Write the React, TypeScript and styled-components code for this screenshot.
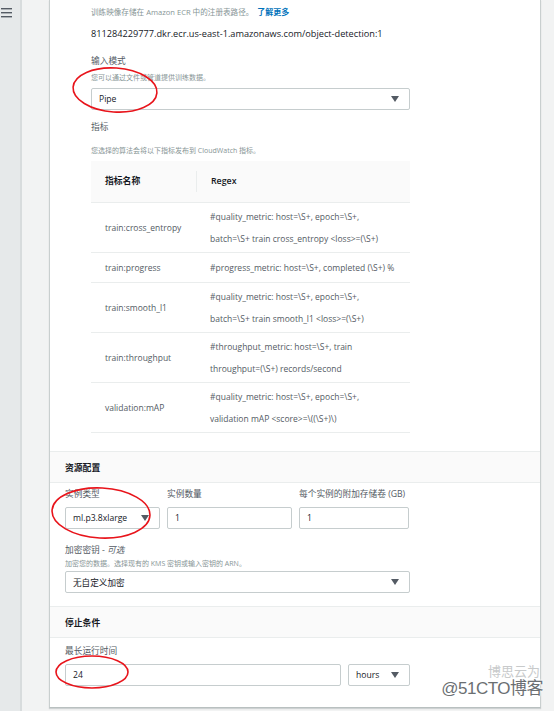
import React from "react";
import styled, { createGlobalStyle } from "styled-components";

const Global = createGlobalStyle`
  html, body { margin: 0; padding: 0; }
  body {
    font-family: "Open Sans", "Noto Sans CJK SC", sans-serif;
    color: #16191f;
    background: #f2f3f3;
  }
`;

const Page = styled.div`
  position: relative;
  display: flex;
  width: 554px;
  height: 711px;
  overflow: hidden;
`;

const Sidebar = styled.div`
  width: 22px;
  flex: none;
  background: #e6e9ea;
  border-right: 2px solid #d8dcdd;
  padding-top: 7px;
  box-sizing: border-box;
`;

const Main = styled.div`
  flex: 1;
  background: #f2f3f3;
  padding: 0 13px 4px 27px;
  display: flex;
  align-items: flex-start;
`;

const Panel = styled.div`
  flex: 1;
  background: #fff;
  border-left: 1px solid #c9cfcf;
  border-right: 1px solid #c9cfcf;
  border-bottom: 1px solid #b9c0c0;
  box-shadow: 0 1px 1px rgba(0, 28, 36, 0.15);
  padding-bottom: 21px;
`;

const TopBlock = styled.div`
  display: flex;
  flex-direction: column;
  padding: 5px 130px 0 41px;
`;

const Hint = styled.div<{ $mt?: number; $size?: number }>`
  font-size: ${(p) => p.$size ?? 7}px;
  line-height: 13px;
  color: #879596;
  margin-top: ${(p) => p.$mt ?? 0}px;
  white-space: nowrap;
`;

const Link = styled.a`
  color: #0073bb;
  font-size: 8px;
  font-weight: 700;
  text-decoration: none;
  margin-left: 4px;
`;

const Value = styled.div<{ $mt?: number }>`
  font-size: 9.2px;
  line-height: 14px;
  color: #16191f;
  margin-top: ${(p) => p.$mt ?? 0}px;
`;

const Label = styled.div<{ $mt?: number }>`
  font-size: 8.7px;
  line-height: 13px;
  color: #545b64;
  margin-top: ${(p) => p.$mt ?? 0}px;
  white-space: nowrap;
`;

const Optional = styled.i`
  font-style: italic;
`;

const Box = styled.div<{ $mt?: number; $w?: string }>`
  box-sizing: border-box;
  height: 22px;
  border: 1px solid #c6cdce;
  border-radius: 2px;
  background: #fff;
  display: flex;
  align-items: center;
  justify-content: space-between;
  padding: 0 10px 0 7px;
  font-size: 8.6px;
  color: #16191f;
  margin-top: ${(p) => p.$mt ?? 0}px;
  width: ${(p) => p.$w ?? "100%"};
  flex: none;
`;

const Arrow = styled.span`
  width: 0;
  height: 0;
  border-left: 4.5px solid transparent;
  border-right: 4.5px solid transparent;
  border-top: 6px solid #545b64;
`;

const Table = styled.div`
  margin-top: 4px;
  display: flex;
  flex-direction: column;
`;

const HeadRow = styled.div`
  display: grid;
  grid-template-columns: 105px 1fr;
  height: 41px;
  background: #fafafa;
  align-items: center;
  font-size: 8.8px;
  font-weight: 600;
  color: #16191f;
`;

const HeadCell = styled.div<{ $divider?: boolean }>`
  padding-left: 14px;
  line-height: 21px;
  border-left: ${(p) => (p.$divider ? "1px solid #eaeded" : "none")};
`;

const Row = styled.div`
  display: grid;
  grid-template-columns: 105px 1fr;
  border-top: 1px solid #eaeded;
  align-items: center;
  font-size: 8.5px;
  color: #545b64;
  padding: 2.5px 0;
  min-height: 24px;
`;

const Cell = styled.div`
  padding-left: 14px;
  line-height: 22px;
  white-space: nowrap;
`;

const TableEnd = styled.div`
  border-top: 1px solid #eaeded;
`;

const SectionHead = styled.div<{ $mt?: number }>`
  margin-top: ${(p) => p.$mt ?? 0}px;
  height: 30px;
  box-sizing: content-box;
  background: #fafafa;
  border-top: 1px solid #eaeded;
  border-bottom: 1px solid #eaeded;
  display: flex;
  align-items: center;
  padding-left: 15px;
  font-size: 8.8px;
  font-weight: 700;
  color: #16191f;
`;

const SectionBody = styled.div<{ $pt?: number }>`
  padding: ${(p) => p.$pt ?? 6}px 130px 0 15px;
  display: flex;
  flex-direction: column;
`;

const FieldRow = styled.div`
  display: grid;
  grid-template-columns: 95px 125px 110px;
  column-gap: 7px;
`;

const Field = styled.div`
  display: flex;
  flex-direction: column;
  gap: 6px;
`;

const InlineRow = styled.div<{ $mt?: number }>`
  display: flex;
  gap: 7px;
  margin-top: ${(p) => p.$mt ?? 0}px;
`;

const Overlay = styled.svg`
  position: absolute;
  left: 0;
  top: 0;
  pointer-events: none;
`;

const Watermark = styled.div`
  position: absolute;
  right: 11px;
  bottom: 13px;
  font-family: "Liberation Sans", "Noto Sans CJK SC", sans-serif;
  font-size: 17px;
  line-height: 18px;
  color: #6b6f72;
  text-shadow: 0 0 2px #fff, 0 0 2px #fff, 0 0 3px #fff;
  letter-spacing: -0.5px;
`;

const WatermarkSmall = styled.div`
  position: absolute;
  right: 14px;
  bottom: 33px;
  font-family: "Noto Sans CJK SC", sans-serif;
  font-size: 13px;
  line-height: 14px;
  color: #c8cacb;
  text-shadow: 0 0 2px #fff;
`;

const Hamburger = () => (
  <svg width="14" height="12" viewBox="0 0 14 12" style={{ display: "block" }}>
    <rect x="1" y="1" width="11" height="1.4" fill="#545b64" />
    <rect x="1" y="5" width="11" height="1.4" fill="#545b64" />
    <rect x="1" y="9" width="11" height="1.4" fill="#545b64" />
  </svg>
);

const metrics: { name: string; regex: string[] }[] = [
  {
    name: "train:cross_entropy",
    regex: [
      "#quality_metric: host=\\S+, epoch=\\S+,",
      "batch=\\S+ train cross_entropy <loss>=(\\S+)",
    ],
  },
  { name: "train:progress", regex: ["#progress_metric: host=\\S+, completed (\\S+) %"] },
  {
    name: "train:smooth_l1",
    regex: [
      "#quality_metric: host=\\S+, epoch=\\S+,",
      "batch=\\S+ train smooth_l1 <loss>=(\\S+)",
    ],
  },
  {
    name: "train:throughput",
    regex: ["#throughput_metric: host=\\S+, train", "throughput=(\\S+) records/second"],
  },
  {
    name: "validation:mAP",
    regex: [
      "#quality_metric: host=\\S+, epoch=\\S+,",
      "validation mAP <score>=\\((\\S+)\\)",
    ],
  },
];

export default function App() {
  return (
    <>
      <Global />
      <Page>
        <Sidebar>
          <Hamburger />
        </Sidebar>
        <Main>
          <Panel>
            <TopBlock>
              <Hint $size={7.6}>
                训练映像存储在 Amazon ECR 中的注册表路径。
                <Link>了解更多</Link>
              </Hint>
              <Value $mt={8}>811284229777.dkr.ecr.us-east-1.amazonaws.com/object-detection:1</Value>
              <Label $mt={14}>输入模式</Label>
              <Hint $mt={3}>您可以通过文件或管道提供训练数据。</Hint>
              <Box $mt={4}>
                <span>Pipe</span>
                <Arrow />
              </Box>
              <Label $mt={11}>指标</Label>
              <Hint $mt={10}>您选择的算法会将以下指标发布到 CloudWatch 指标。</Hint>
              <Table>
                <HeadRow>
                  <HeadCell>指标名称</HeadCell>
                  <HeadCell $divider>Regex</HeadCell>
                </HeadRow>
                {metrics.map((m) => (
                  <Row key={m.name}>
                    <Cell>{m.name}</Cell>
                    <div>
                      {m.regex.map((r) => (
                        <Cell key={r}>{r}</Cell>
                      ))}
                    </div>
                  </Row>
                ))}
                <TableEnd />
              </Table>
            </TopBlock>

            <SectionHead $mt={18}>资源配置</SectionHead>
            <SectionBody $pt={5}>
              <FieldRow>
                <Field>
                  <Label>实例类型</Label>
                  <Box>
                    <span>ml.p3.8xlarge</span>
                    <Arrow />
                  </Box>
                </Field>
                <Field>
                  <Label>实例数量</Label>
                  <Box>1</Box>
                </Field>
                <Field>
                  <Label>每个实例的附加存储卷 (GB)</Label>
                  <Box>1</Box>
                </Field>
              </FieldRow>
              <Label $mt={15}>
                加密密钥 - <Optional>可选</Optional>
              </Label>
              <Hint $mt={0}>加密您的数据。选择现有的 KMS 密钥或输入密钥的 ARN。</Hint>
              <Box $mt={1}>
                <span>无自定义加密</span>
                <Arrow />
              </Box>
            </SectionBody>

            <SectionHead $mt={13}>停止条件</SectionHead>
            <SectionBody $pt={7}>
              <Label>最长运行时间</Label>
              <InlineRow $mt={6}>
                <Box $w="276px">24</Box>
                <Box $w="62px">
                  <span>hours</span>
                  <Arrow />
                </Box>
              </InlineRow>
            </SectionBody>
          </Panel>
        </Main>

        <Overlay width="554" height="711" viewBox="0 0 554 711">
          <ellipse cx="115" cy="90" rx="42" ry="22" fill="none" stroke="#e8141b" strokeWidth="1.6" transform="rotate(4 115 90)" />
          <ellipse cx="101" cy="513" rx="49" ry="25" fill="none" stroke="#e8141b" strokeWidth="1.6" transform="rotate(3 101 513)" />
          <ellipse cx="92" cy="672" rx="36" ry="16" fill="none" stroke="#e8141b" strokeWidth="1.6" />
        </Overlay>
        <WatermarkSmall>博思云为</WatermarkSmall>
        <Watermark>@51CTO博客</Watermark>
      </Page>
    </>
  );
}
